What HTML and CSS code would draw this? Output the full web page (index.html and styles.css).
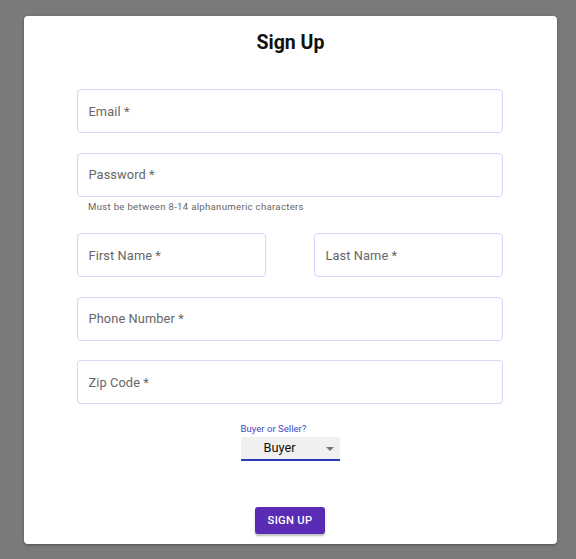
FILE: index.html
```html
<!DOCTYPE html>
<html>
<head>
<meta charset="utf-8">
<link rel="stylesheet" href="styles.css">
</head>
<body>
<div class="card">
  <h1 class="title">Sign Up</h1>
  <form class="form">
    <div class="field"><span class="label">Email *</span></div>
    <div class="group">
      <div class="field"><span class="label">Password *</span></div>
      <p class="helper">Must be between 8-14 alphanumeric characters</p>
    </div>
    <div class="row">
      <div class="field"><span class="label">First Name *</span></div>
      <div class="field"><span class="label">Last Name *</span></div>
    </div>
    <div class="field"><span class="label">Phone Number *</span></div>
    <div class="field"><span class="label">Zip Code *</span></div>
    <div class="select-wrap">
      <span class="select-label">Buyer or Seller?</span>
      <div class="select">
        <span class="select-value">Buyer</span>
        <svg class="arrow" width="8" height="4" viewBox="0 0 8 4"><path d="M0 0 L8 0 L4 4 Z" fill="#757575"/></svg>
      </div>
    </div>
    <button type="button" class="btn">SIGN UP</button>
  </form>
</div>
</body>
</html>
```

FILE: styles.css
```css
* { box-sizing: border-box; }
html, body { margin: 0; padding: 0; }
body {
  background: #7b797b;
  font-family: Roboto, "Noto Sans", sans-serif;
  height: 559px;
  overflow: hidden;
}
.card {
  margin: 16px 0 0 24px;
  width: 533px;
  height: 528px;
  background: #fff;
  border-radius: 4px;
  box-shadow: 0 1px 3px rgba(0,0,0,0.35);
  padding-top: 14px;
}
.title {
  margin: 0;
  text-align: center;
  font-size: 19.5px;
  line-height: 26px;
  font-weight: 700;
  color: #111;
}
.form {
  width: 426px;
  margin: 33px 0 0 53px;
  display: flex;
  flex-direction: column;
  gap: 19.5px;
}
.field {
  height: 44px;
  border: 1px solid #dcd3fa;
  border-radius: 4px;
  display: flex;
  align-items: center;
  padding-left: 10.5px;
}
.label {
  font-size: 12.8px;
  color: #666;
  letter-spacing: 0.1px;
}
.helper {
  margin: 2px 0 0 11px;
  font-size: 9.6px;
  line-height: 15px;
  color: #666;
  letter-spacing: 0.3px;
}
.row {
  display: grid;
  grid-template-columns: 189px 189px;
  justify-content: space-between;
}
.select-wrap {
  align-self: center;
  width: 99px;
  display: flex;
  flex-direction: column;
  margin-top: -1px;
}
.select-label {
  font-size: 9.6px;
  line-height: 12px;
  color: #3f4bc0;
  margin-bottom: 2px;
}
.select {
  height: 24px;
  background: #f0f0f0;
  border-bottom: 2px solid #2b3bb5;
  border-radius: 3px 3px 0 0;
  position: relative;
  display: flex;
  align-items: center;
  padding-left: 23px;
}
.select-value {
  font-size: 12.8px;
  color: #111;
}
.arrow {
  position: absolute;
  right: 6px;
  top: 10px;
}
.btn {
  align-self: center;
  margin-top: 27px;
  width: 70px;
  height: 27px;
  border: none;
  border-radius: 3px;
  background: #5a2bb5;
  color: #fff;
  font-family: Roboto, sans-serif;
  font-weight: 500;
  font-size: 11.2px;
  letter-spacing: 0.3px;
  box-shadow: 0 2px 2px rgba(0,0,0,0.25);
  padding: 0;
}
```
